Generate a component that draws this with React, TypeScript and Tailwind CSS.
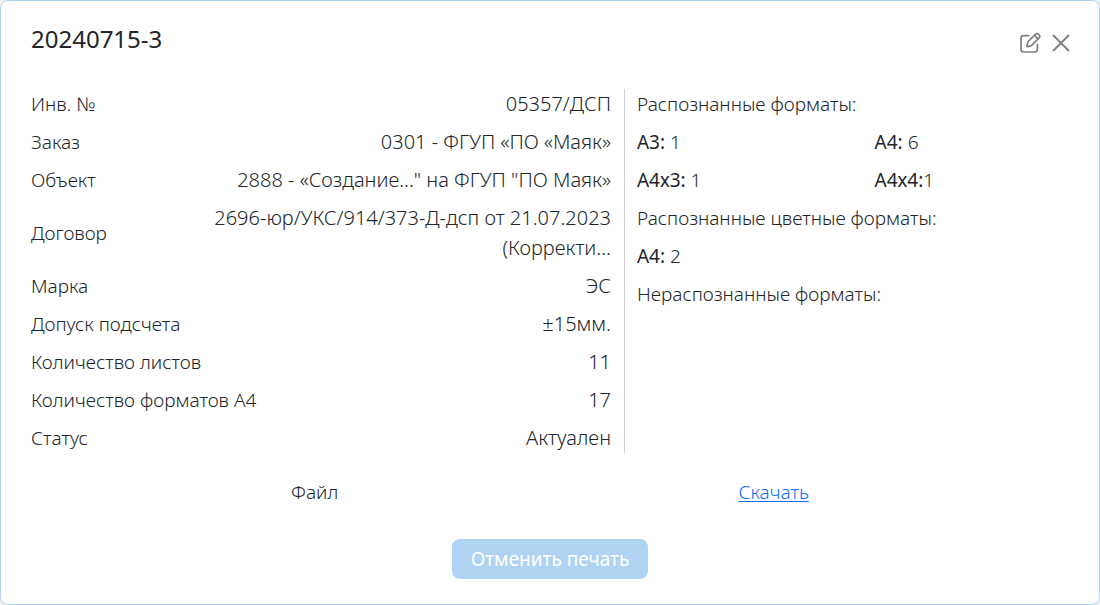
import type { ReactNode } from "react";

const details: { label: string; value: string }[] = [
  { label: "Инв. №", value: "05357/ДСП" },
  { label: "Заказ", value: "0301 - ФГУП «ПО «Маяк»" },
  { label: "Объект", value: "2888 - «Создание...\" на ФГУП \"ПО Маяк»" },
  { label: "Договор", value: "2696-юр/УКС/914/373-Д-дсп от 21.07.2023 (Корректи..." },
  { label: "Марка", value: "ЭС" },
  { label: "Допуск подсчета", value: "±15мм." },
  { label: "Количество листов", value: "11" },
  { label: "Количество форматов А4", value: "17" },
  { label: "Статус", value: "Актуален" },
];

function Format({ name, children }: { name: string; children: ReactNode }) {
  return (
    <p>
      <b className="font-normal">{name}</b>
      {children}
    </p>
  );
}

function EditIcon() {
  return (
    <svg viewBox="-1 0 22 22" className="size-[22px]" fill="none" stroke="currentColor" strokeWidth="1.7" strokeLinecap="round" strokeLinejoin="round" aria-hidden="true">
      <path d="M8.6 3.6H3.4A2.4 2.4 0 0 0 1 6v11.6A2.4 2.4 0 0 0 3.4 20H15a2.4 2.4 0 0 0 2.4-2.4v-5.2" />
      <path d="M6.8 14.6l1-4.6 7.9-7.9a1.9 1.9 0 0 1 2.7 0l.9.9a1.9 1.9 0 0 1 0 2.7l-7.9 7.9z" />
      <path d="M14.6 3.4l3.4 3.4" />
    </svg>
  );
}

function CloseIcon() {
  return (
    <svg viewBox="0 0 18 18" className="size-[18px] overflow-visible" fill="none" stroke="currentColor" strokeWidth="1.9" aria-hidden="true">
      <path d="M2 1l16 16M18 1L2 17" />
    </svg>
  );
}

export default function App() {
  return (
    <div className="bg-[#f1f1f1] font-['Noto_Sans','Open_Sans',sans-serif] font-light text-[#212529]">
      <main className="rounded-lg border border-[#afd3f3] bg-white px-[30px] pt-5 pb-[25px] text-[19px] leading-[30px]">
        <header className="flex items-center justify-between">
          <h1 className="text-2xl leading-9 font-normal">20240715-3</h1>
          <div className="flex items-center gap-2.5 pt-2 text-[#808080]">
            <button type="button" aria-label="Редактировать">
              <EditIcon />
            </button>
            <button type="button" aria-label="Закрыть">
              <CloseIcon />
            </button>
          </div>
        </header>

        <div className="mt-8 grid grid-cols-[594fr_444fr]">
          <dl className="flex flex-col gap-2 border-r border-[#ced1d5] pr-[13px]">
            {details.map(({ label, value }) => (
              <div key={label} className="flex items-center justify-between gap-6">
                <dt className="shrink-0">{label}</dt>
                <dd className="max-w-[420px] text-right text-xl leading-[30px]">{value}</dd>
              </div>
            ))}
          </dl>
          <section className="flex flex-col gap-2 pl-3">
            <h2>Распознанные форматы:</h2>
            <div className="grid grid-cols-[11fr_9fr] gap-y-2">
              <Format name="А3:"> 1</Format>
              <Format name="А4:"> 6</Format>
              <Format name="А4х3:"> 1</Format>
              <Format name="А4х4:">1</Format>
            </div>
            <h2>Распознанные цветные форматы:</h2>
            <Format name="А4:"> 2</Format>
            <h2>Нераспознанные форматы:</h2>
          </section>
        </div>

        <div className="mt-6 flex justify-around px-[60px]">
          <span>Файл</span>
          <a href="#download" className="text-[#0d6efd] underline underline-offset-2">Скачать</a>
        </div>

        <div className="mt-8 flex justify-center">
          <button type="button" className="h-10 rounded-lg bg-[#afd3f3] px-[19px] font-normal text-white">
            Отменить печать
          </button>
        </div>
      </main>
    </div>
  );
}
